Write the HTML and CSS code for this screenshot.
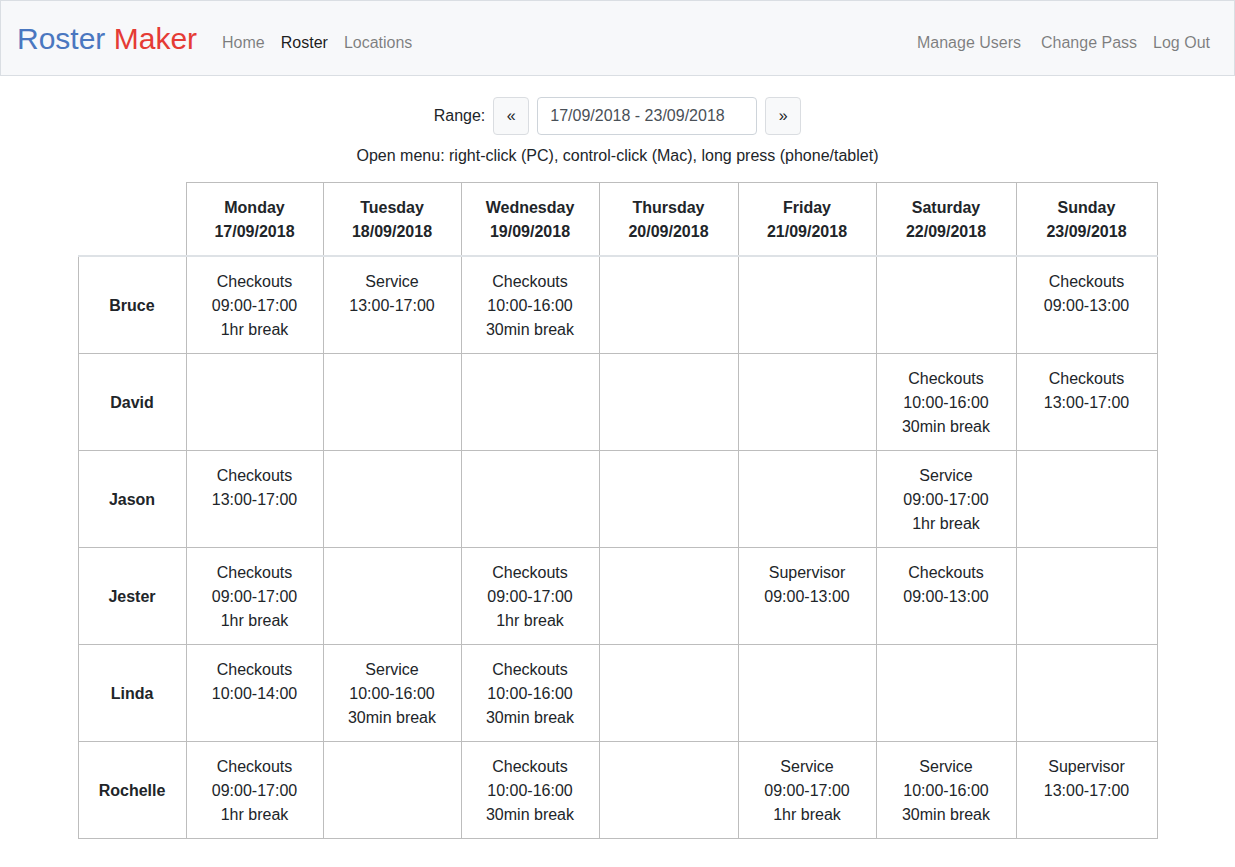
FILE: index.html
```html
<!DOCTYPE html>
<html lang="en">
<head>
<meta charset="utf-8">
<title>Roster Maker</title>
<link rel="stylesheet" href="styles.css">
</head>
<body>
<nav class="navbar">
  <a class="brand" href="#"><span class="brand-blue">Roster</span> <span class="brand-red">Maker</span></a>
  <ul class="nav">
    <li><a class="nav-link" href="#">Home</a></li>
    <li><a class="nav-link active" href="#">Roster</a></li>
    <li><a class="nav-link" href="#">Locations</a></li>
  </ul>
  <ul class="nav nav-right">
    <li><a class="nav-link wide" href="#">Manage Users</a></li>
    <li><a class="nav-link" href="#">Change Pass</a></li>
    <li><a class="nav-link" href="#">Log Out</a></li>
  </ul>
</nav>

<main class="main">
  <div class="range">
    <span class="range-label">Range:</span>
    <button class="btn">&laquo;</button>
    <input class="range-input" type="text" value="17/09/2018 - 23/09/2018">
    <button class="btn">&raquo;</button>
  </div>
  <p class="hint">Open menu: right-click (PC), control-click (Mac), long press (phone/tablet)</p>

  <table class="roster">
    <colgroup>
      <col class="c-name"><col class="c-mon"><col class="c-tue"><col class="c-wed"><col class="c-thu"><col class="c-fri"><col class="c-sat"><col class="c-sun">
    </colgroup>
    <thead>
      <tr>
        <th class="corner"></th>
        <th>Monday<br>17/09/2018</th>
        <th>Tuesday<br>18/09/2018</th>
        <th>Wednesday<br>19/09/2018</th>
        <th>Thursday<br>20/09/2018</th>
        <th>Friday<br>21/09/2018</th>
        <th>Saturday<br>22/09/2018</th>
        <th>Sunday<br>23/09/2018</th>
      </tr>
    </thead>
    <tbody>
      <tr>
        <th class="name">Bruce</th>
        <td>Checkouts<br>09:00-17:00<br>1hr break</td>
        <td>Service<br>13:00-17:00</td>
        <td>Checkouts<br>10:00-16:00<br>30min break</td>
        <td></td>
        <td></td>
        <td></td>
        <td>Checkouts<br>09:00-13:00</td>
      </tr>
      <tr>
        <th class="name">David</th>
        <td></td>
        <td></td>
        <td></td>
        <td></td>
        <td></td>
        <td>Checkouts<br>10:00-16:00<br>30min break</td>
        <td>Checkouts<br>13:00-17:00</td>
      </tr>
      <tr>
        <th class="name">Jason</th>
        <td>Checkouts<br>13:00-17:00</td>
        <td></td>
        <td></td>
        <td></td>
        <td></td>
        <td>Service<br>09:00-17:00<br>1hr break</td>
        <td></td>
      </tr>
      <tr>
        <th class="name">Jester</th>
        <td>Checkouts<br>09:00-17:00<br>1hr break</td>
        <td></td>
        <td>Checkouts<br>09:00-17:00<br>1hr break</td>
        <td></td>
        <td>Supervisor<br>09:00-13:00</td>
        <td>Checkouts<br>09:00-13:00</td>
        <td></td>
      </tr>
      <tr>
        <th class="name">Linda</th>
        <td>Checkouts<br>10:00-14:00</td>
        <td>Service<br>10:00-16:00<br>30min break</td>
        <td>Checkouts<br>10:00-16:00<br>30min break</td>
        <td></td>
        <td></td>
        <td></td>
        <td></td>
      </tr>
      <tr>
        <th class="name">Rochelle</th>
        <td>Checkouts<br>09:00-17:00<br>1hr break</td>
        <td></td>
        <td>Checkouts<br>10:00-16:00<br>30min break</td>
        <td></td>
        <td>Service<br>09:00-17:00<br>1hr break</td>
        <td>Service<br>10:00-16:00<br>30min break</td>
        <td>Supervisor<br>13:00-17:00</td>
      </tr>
    </tbody>
  </table>
</main>
</body>
</html>
```

FILE: styles.css
```css
* { box-sizing: border-box; }

html, body {
  margin: 0;
  padding: 0;
}

body {
  font-family: "Liberation Sans", Arial, sans-serif;
  font-size: 16px;
  line-height: 24px;
  color: #212529;
  background: #fff;
}

a { text-decoration: none; }

.navbar {
  display: flex;
  align-items: center;
  height: 76px;
  padding: 0 16px;
  background: #f7f8fa;
  border: 1px solid #dadee3;
  width: 1235px;
}

.brand {
  font-size: 30px;
  line-height: 45px;
  margin-right: 17px;
  margin-top: 1px;
  white-space: nowrap;
}

.brand-blue { color: #4a77c0; }
.brand-red { color: #e53b35; }

.nav {
  display: flex;
  list-style: none;
  margin: 10px 0 0;
  padding: 0;
}

.nav-right { margin-left: auto; }

.nav-link {
  display: block;
  padding: 8px;
  color: rgba(0, 0, 0, 0.5);
}

.nav-link.wide { padding-right: 12px; }

.nav-link.active { color: rgba(0, 0, 0, 0.9); }

.main {
  padding-top: 21px;
}

.range {
  display: flex;
  justify-content: center;
  align-items: center;
  gap: 8px;
}

.btn {
  font-family: inherit;
  font-size: 16px;
  line-height: 24px;
  height: 38px;
  width: 36px;
  padding: 0;
  color: #212529;
  background: #f8f9fa;
  border: 1px solid #dadde1;
  border-radius: 4px;
}

.range-input {
  font-family: inherit;
  font-size: 16px;
  line-height: 24px;
  height: 38px;
  width: 220px;
  padding: 6px 12px;
  color: #495057;
  border: 1px solid #ced4da;
  border-radius: 4px;
  background: #fff;
}

.hint {
  margin: 9px 0 14px;
  text-align: center;
}

.roster {
  border-collapse: collapse;
  margin: 0 auto;
  table-layout: fixed;
  width: 1079px;
}

.c-name { width: 108px; }
.c-mon { width: 137px; }
.c-tue { width: 138px; }
.c-wed { width: 138px; }
.c-thu { width: 139px; }
.c-fri { width: 138px; }
.c-sat { width: 140px; }
.c-sun { width: 141px; }

.roster th,
.roster td {
  border: 1px solid #bdbdbd;
  padding: 13px 12px 11px;
  text-align: center;
  vertical-align: top;
}

.roster thead th {
  font-weight: bold;
  vertical-align: bottom;
  border-bottom: 2px solid #dee2e6;
}

.roster thead th.corner {
  border-top: none;
  border-left: none;
}

.roster td {
  height: 97px;
}

.roster th.name {
  font-weight: bold;
  vertical-align: middle;
}
```
